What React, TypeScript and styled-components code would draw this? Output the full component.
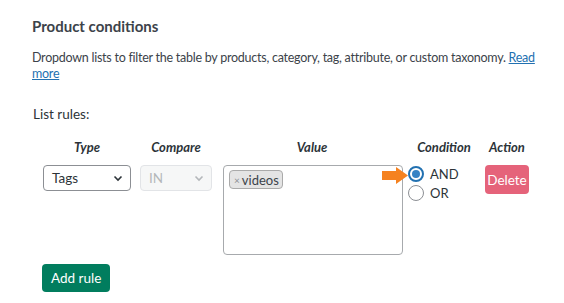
import React, { useState } from 'react';
import styled, { createGlobalStyle } from 'styled-components';

// --- Global ---
const GlobalStyle = createGlobalStyle`
  body {
    margin: 0;
    background: #fff;
    font-family: Lato, "Open Sans", sans-serif;
    color: #3c434a;
  }
`;

// --- Types ---
type Condition = 'AND' | 'OR';

interface Rule {
  id: number;
  type: string;
  compare: string;
  values: string[];
  condition: Condition;
}

// --- Styled Components ---
const Page = styled.div`
  padding: 17px 32px 0 32px;
  width: 512px;
`;

const Title = styled.h2`
  margin: 0;
  font-size: 15px;
  line-height: 18px;
  font-weight: 700;
  color: #3c434a;
`;

const Description = styled.p`
  margin: 15px 0 0;
  font-size: 12.5px;
  line-height: 16px;
  letter-spacing: -0.25px;
`;

const Link = styled.a`
  color: #2271b1;
  text-decoration: underline;
`;

const SubLabel = styled.div`
  margin: 24px 0 0 1px;
  font-size: 13.5px;
  color: #2c3338;
`;

const RulesGrid = styled.div`
  display: grid;
  grid-template-columns: 88px 72px 182px 64px 44px;
  column-gap: 9px;
  margin: 17px 0 0 11px;
`;

const HeadCell = styled.div`
  font-size: 13px;
  line-height: 16px;
  font-weight: 700;
  font-style: italic;
  text-align: center;
  color: #2c3338;
  padding-bottom: 10px;
`;

const Cell = styled.div`
  position: relative;
`;

const SelectBox = styled.div<{ disabled?: boolean }>`
  display: flex;
  align-items: center;
  justify-content: space-between;
  height: 26px;
  box-sizing: border-box;
  padding: 0 6px 0 8px;
  border: 1px solid ${p => (p.disabled ? '#e2e4e7' : '#8c8f94')};
  border-radius: 4px;
  background: ${p => (p.disabled ? '#f6f7f7' : '#fff')};
  color: ${p => (p.disabled ? '#b4b7ba' : '#2c3338')};
  font-size: 13.5px;
`;

const ValueBox = styled.div`
  display: flex;
  align-items: flex-start;
  flex-wrap: wrap;
  gap: 4px;
  margin-left: 2px;
  height: 90px;
  box-sizing: border-box;
  border: 1px solid #a7aaad;
  border-radius: 4px;
  padding: 4px 5px;
`;

const Chip = styled.span`
  display: inline-flex;
  align-items: center;
  gap: 2px;
  height: 19px;
  box-sizing: border-box;
  padding: 0 3px 0 4px;
  background: #e4e4e4;
  border: 1px solid #aaa;
  border-radius: 4px;
  font-size: 13px;
  color: #3c434a;
`;

const ChipRemove = styled.span`
  font-size: 10px;
  color: #8c8f94;
`;

const RadioList = styled.div`
  display: flex;
  flex-direction: column;
  gap: 3px;
  padding-top: 1px;
  margin-left: -4px;
`;

const RadioLabel = styled.label`
  display: flex;
  align-items: center;
  gap: 6px;
  font-size: 13px;
  line-height: 16px;
  color: #2c3338;
`;

const Radio = styled.input`
  appearance: none;
  margin: 0;
  width: 16px;
  height: 16px;
  border-radius: 50%;
  border: 1px solid #8c8f94;
  background: #fff;
  box-sizing: border-box;
  display: grid;
  place-items: center;

  &:checked {
    border: 2px solid #2271b1;
  }
  &:checked::after {
    content: '';
    width: 8px;
    height: 8px;
    border-radius: 50%;
    background: #3582c4;
  }
`;

const Pointer = styled.svg`
  position: absolute;
  left: -30px;
  top: 2px;
`;

const Button = styled.button<{ tone: 'danger' | 'success' }>`
  border: none;
  border-radius: 4px;
  color: #fff;
  font-family: inherit;
  font-size: 13.5px;
  cursor: pointer;
  background: ${p => (p.tone === 'danger' ? '#e5637a' : '#017d5e')};
`;

const DeleteButton = styled(Button)`
  width: 44px;
  height: 29px;
  padding: 0;
`;

const AddButton = styled(Button)`
  margin: 9px 0 0 10px;
  height: 28px;
  padding: 0 9px;
`;

const Chevron = () => (
  <svg width="12" height="12" viewBox="0 0 12 12" fill="none">
    <path d="M2.5 4.5 6 8l3.5-3.5" stroke="currentColor" strokeWidth="1.6" />
  </svg>
);

// --- Main Component ---
export default function App() {
  const [rules, setRules] = useState<Rule[]>([
    { id: 1, type: 'Tags', compare: 'IN', values: ['videos'], condition: 'AND' },
  ]);

  const setCondition = (id: number, condition: Condition) =>
    setRules(rs => rs.map(r => (r.id === id ? { ...r, condition } : r)));

  return (
    <>
      <GlobalStyle />
      <Page>
        <Title>Product conditions</Title>
        <Description>
          Dropdown lists to filter the table by products, category, tag, attribute, or custom
          taxonomy. <Link href="#">Read more</Link>
        </Description>
        <SubLabel>List rules:</SubLabel>

        <RulesGrid>
          <HeadCell>Type</HeadCell>
          <HeadCell>Compare</HeadCell>
          <HeadCell>Value</HeadCell>
          <HeadCell>Condition</HeadCell>
          <HeadCell>Action</HeadCell>

          {rules.map(rule => (
            <React.Fragment key={rule.id}>
              <Cell>
                <SelectBox>
                  {rule.type}
                  <Chevron />
                </SelectBox>
              </Cell>
              <Cell>
                <SelectBox disabled>
                  {rule.compare}
                  <Chevron />
                </SelectBox>
              </Cell>
              <Cell>
                <ValueBox>
                  {rule.values.map(v => (
                    <Chip key={v}>
                      <ChipRemove>×</ChipRemove>
                      {v}
                    </Chip>
                  ))}
                </ValueBox>
              </Cell>
              <Cell>
                <Pointer width="26" height="17" viewBox="0 0 26 17">
                  <path d="M0 4h14V0l12 8.5L14 17v-4H0z" fill="#f58220" />
                </Pointer>
                <RadioList>
                  {(['AND', 'OR'] as Condition[]).map(c => (
                    <RadioLabel key={c}>
                      <Radio
                        type="radio"
                        name={`cond-${rule.id}`}
                        checked={rule.condition === c}
                        onChange={() => setCondition(rule.id, c)}
                      />
                      {c}
                    </RadioLabel>
                  ))}
                </RadioList>
              </Cell>
              <Cell>
                <DeleteButton tone="danger">Delete</DeleteButton>
              </Cell>
            </React.Fragment>
          ))}
        </RulesGrid>

        <AddButton tone="success">Add rule</AddButton>
      </Page>
    </>
  );
}
